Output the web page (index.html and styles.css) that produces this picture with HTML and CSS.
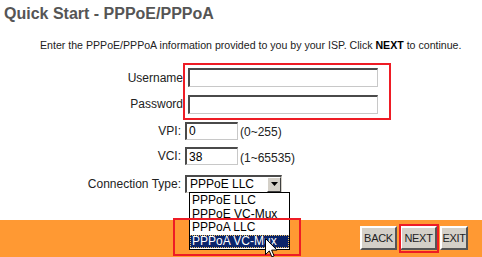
FILE: index.html
```html
<!DOCTYPE html>
<html lang="en">
<head>
    <meta charset="UTF-8">
    <title>Quick Start - PPPoE/PPPoA</title>
    <link rel="stylesheet" href="styles.css">
</head>
<body>
    <div class="page">
        <h1 class="title">Quick Start - PPPoE/PPPoA</h1>
        <p class="intro">Enter the PPPoE/PPPoA information provided to you by your ISP. Click <b>NEXT</b> to continue.</p>

        <div class="form">
            <div class="row row-user">
                <label class="lbl">Username</label>
                <input class="field wide" type="text">
            </div>
            <div class="row row-pass">
                <label class="lbl">Password</label>
                <input class="field wide" type="password">
            </div>
            <div class="row row-vpi">
                <label class="lbl">VPI:</label>
                <input class="field short" type="text" value="0">
                <span class="hint">(0~255)</span>
            </div>
            <div class="row row-vci">
                <label class="lbl">VCI:</label>
                <input class="field short" type="text" value="38">
                <span class="hint">(1~65535)</span>
            </div>
            <div class="row row-type">
                <label class="lbl">Connection Type:</label>
                <div class="select">
                    <span class="select-value">PPPoE LLC</span>
                    <span class="select-btn">
                        <svg width="7" height="4" viewBox="0 0 7 4"><path d="M0 0h7L3.5 4z" fill="#000"/></svg>
                    </span>
                </div>
            </div>
        </div>

        <div class="footer">
            <button class="btn btn-back">BACK</button>
            <button class="btn btn-next">NEXT</button>
            <button class="btn btn-exit">EXIT</button>
        </div>

        <!-- open dropdown + annotations -->
        <ul class="options">
            <li>PPPoE LLC</li>
            <li>PPPoE VC-Mux</li>
            <li>PPPoA LLC</li>
            <li class="active">PPPoA VC-Mux</li>
        </ul>
        <div class="mark mark-login"></div>
        <div class="mark mark-pppoa"></div>
        <div class="mark mark-next"></div>
        <svg class="cursor" width="13" height="20" viewBox="0 0 13 20">
            <path d="M0.5 0.5v16l3.8-3.6 2.6 6 2.2-1-2.5-5.8h5.4z" fill="#fff" stroke="#000" stroke-width="1"/>
        </svg>
    </div>
</body>
</html>
```

FILE: styles.css
```css
body {
    margin: 0;
    background: #fff;
    font-family: "Liberation Sans", Arial, sans-serif;
    color: #222;
}

.page {
    position: relative;
    width: 482px;
    height: 257px;
    display: flex;
    flex-direction: column;
    overflow: hidden;
}

.title {
    margin: 0;
    padding: 4px 0 0 4px;
    font-size: 16px;
    font-weight: bold;
    color: #555;
    line-height: 19px;
}

.intro {
    margin: 16px 0 0 40px;
    font-size: 10.6px;
    line-height: 13px;
    white-space: nowrap;
    color: #222;
}

.intro b {
    color: #000;
}

.form {
    display: flex;
    flex-direction: column;
    margin-top: 12px;
}

.row {
    display: flex;
    align-items: center;
}

.row-user { height: 27px; }
.row-pass { height: 26px; }
.row-vpi { height: 27px; }
.row-vci { height: 24px; }
.row-type { height: 31px; }

.lbl {
    width: 185px;
    text-align: right;
    font-size: 12px;
    padding-right: 4px;
    box-sizing: border-box;
    color: #222;
}

.row-user .lbl,
.row-pass .lbl {
    width: 183px;
    padding-right: 0;
    margin-right: 5px;
}

.field {
    height: 19px;
    box-sizing: border-box;
    margin: 0;
    padding: 0 2px;
    font-family: "Liberation Sans", Arial, sans-serif;
    font-size: 12px;
    color: #000;
    background: #fff;
    border-top: 2px solid #4a4a4a;
    border-left: 2px solid #4a4a4a;
    border-right: 1px solid #c8c8c8;
    border-bottom: 1px solid #c8c8c8;
    outline: none;
}

.wide {
    width: 190px;
}

.short {
    width: 53px;
    height: 18px;
}

.hint {
    font-size: 12px;
    margin-left: 2px;
    margin-top: 3px;
    color: #222;
}

.select {
    display: flex;
    align-items: center;
    justify-content: space-between;
    width: 97px;
    height: 18px;
    box-sizing: border-box;
    border-top: 2px solid #4a4a4a;
    border-left: 2px solid #4a4a4a;
    border-right: 1px solid #d4d0c8;
    border-bottom: 1px solid #d4d0c8;
    background: #fff;
    font-size: 12px;
    color: #000;
}

.select-value {
    padding-left: 3px;
}

.select-btn {
    display: flex;
    align-items: center;
    justify-content: center;
    width: 14px;
    height: 15px;
    box-sizing: border-box;
    background: #d4d0c8;
    border-top: 1px solid #fff;
    border-left: 1px solid #fff;
    border-right: 1px solid #404040;
    border-bottom: 1px solid #404040;
}

.footer {
    margin-top: auto;
    height: 37px;
    background: #ff9933;
    display: flex;
    justify-content: flex-end;
    align-items: flex-start;
    gap: 3px;
    padding: 6px 14px 0 0;
    box-sizing: border-box;
}

.btn {
    height: 24px;
    margin: 0;
    padding: 0;
    font-family: "Liberation Sans", Arial, sans-serif;
    font-size: 11px;
    color: #222;
    background: #d4d0c8;
    border-top: 2px solid #fff;
    border-left: 2px solid #fff;
    border-right: 2px solid #555;
    border-bottom: 2px solid #555;
    letter-spacing: -0.3px;
}

.btn-back {
    width: 37px;
}

.btn-next {
    width: 37px;
}

.btn-exit {
    width: 28px;
}

.options {
    position: absolute;
    left: 189px;
    top: 192px;
    width: 101px;
    margin: 0;
    padding: 1px 0;
    list-style: none;
    background: #fff;
    border: 1px solid #000;
    box-sizing: border-box;
    font-size: 12px;
    color: #000;
}

.options li {
    height: 13.5px;
    line-height: 13px;
    padding-left: 2px;
}

.options .active {
    background: #0a246a;
    color: #fff;
    outline: 1px dotted #f0c060;
    outline-offset: -1px;
}

.mark {
    position: absolute;
    border: 2px solid #ee1c25;
    box-sizing: border-box;
}

.mark-login {
    left: 183px;
    top: 63px;
    width: 208px;
    height: 57px;
}

.mark-pppoa {
    left: 173px;
    top: 218px;
    width: 128px;
    height: 38px;
}

.mark-next {
    left: 399px;
    top: 224px;
    width: 40px;
    height: 29px;
}

.cursor {
    position: absolute;
    left: 265px;
    top: 238px;
}
```
